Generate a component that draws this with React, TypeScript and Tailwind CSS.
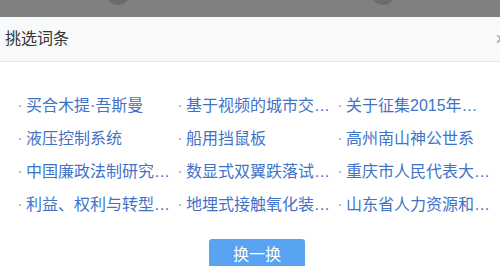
const WORDS = [
	"买合木提·吾斯曼",
	"基于视频的城市交通信号控制",
	"关于征集2015年度课题",
	"液压控制系统",
	"船用挡鼠板",
	"高州南山神公世系",
	"中国廉政法制研究中心",
	"数显式双翼跌落试验机",
	"重庆市人民代表大会常务委员会",
	"利益、权利与转型期社会",
	"地埋式接触氧化装置设备",
	"山东省人力资源和社会保障厅",
];

export default function App() {
	return (
		<div
			className="w-[500px] h-[266px] overflow-hidden bg-white relative"
			style={{ fontFamily: '"Liberation Sans", "Noto Sans CJK SC", sans-serif' }}
		>
			{/* dimmed page behind */}
			<div className="h-[17px] bg-[#808080] relative overflow-hidden">
				<span className="absolute left-[106px] top-[-19px] w-6 h-6 rounded-full bg-[#6c6c6c]" />
				<span className="absolute left-[371px] top-[-19px] w-6 h-6 rounded-full bg-[#6c6c6c]" />
			</div>

			<div className="w-[520px]">
				{/* header */}
				<div className="h-[45px] bg-[#f8f9fb] border-b border-[#e4e6ea] flex items-center justify-between pl-[5px] pr-[14px]">
					<h3 className="text-[16px] text-[#333]">挑选词条</h3>
					<span className="text-[18px] text-[#999] leading-none">×</span>
				</div>

				{/* body */}
				<div className="pt-[27px] pl-[14px]">
					<ul className="grid grid-cols-[160px_160px_160px]">
						{WORDS.map(w => (
							<li key={w} className="h-[33px] leading-[33px] flex items-center text-[16px] pr-[3px]">
								<span className="text-[#a0a0a0] w-[12px] shrink-0 text-center">·</span>
								<a className="text-[#3f73c6] truncate">{w}</a>
							</li>
						))}
					</ul>
					<div className="flex justify-center w-[486px] mt-[18px]">
						<button className="w-[96px] h-[32px] rounded-[3px] bg-[#58a3f2] text-white text-[16px]">换一换</button>
					</div>
				</div>
			</div>
		</div>
	);
}
